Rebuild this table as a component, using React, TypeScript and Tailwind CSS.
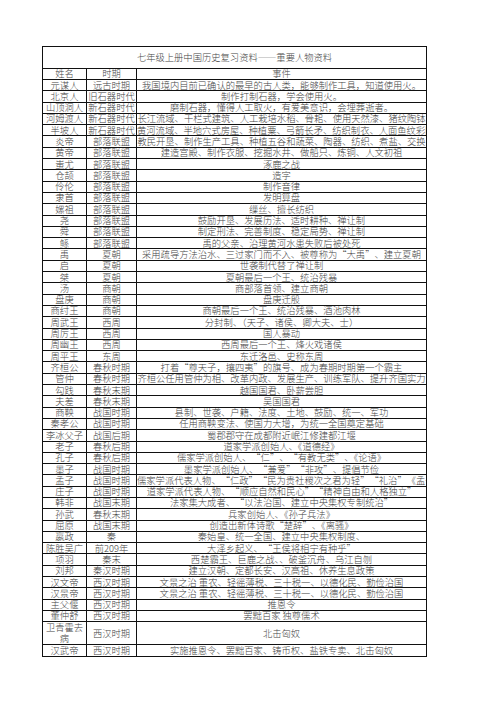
import React from "react";

type Row = [string, string, string, boolean?];

const rows: Row[] = [
  ["元谋人", "远古时期", "我国境内目前已确认的最早的古人类，能够制作工具，知道使用火。"],
  ["北京人", "旧石器时代", "制作打制石器，学会使用火。"],
  ["山顶洞人", "新石器时代", "磨制石器，懂得人工取火，有爱美意识，会埋葬逝者。"],
  ["河姆渡人", "新石器时代", "长江流域、干栏式建筑、人工栽培水稻、骨耜、使用天然漆、猪纹陶钵"],
  ["半坡人", "新石器时代", "黄河流域、半地穴式房屋、种植粟、弓箭长矛、纺织制衣、人面鱼纹彩陶盆"],
  ["炎帝", "部落联盟", "教民开垦、制作生产工具、种植五谷和蔬菜、陶器、纺织、煮盐、交换"],
  ["黄帝", "部落联盟", "建造宫殿、制作衣服、挖掘水井、做船只、炼铜、人文初祖"],
  ["蚩尤", "部落联盟", "涿鹿之战"],
  ["仓颉", "部落联盟", "造字"],
  ["伶伦", "部落联盟", "制作音律"],
  ["隶首", "部落联盟", "发明算盘"],
  ["嫘祖", "部落联盟", "缫丝、擅长纺织"],
  ["尧", "部落联盟", "鼓励开垦、发展历法、适时耕种、禅让制"],
  ["舜", "部落联盟", "制定刑法、完善制度、稳定局势、禅让制"],
  ["鲧", "部落联盟", "禹的父亲、治理黄河水患失败后被处死"],
  ["禹", "夏朝", "采用疏导方法治水、三过家门而不入、被尊称为“大禹”、建立夏朝"],
  ["启", "夏朝", "世袭制代替了禅让制"],
  ["桀", "夏朝", "夏朝最后一个王、统治残暴"],
  ["汤", "商朝", "商部落首领、建立商朝"],
  ["盘庚", "商朝", "盘庚迁殷"],
  ["商纣王", "商朝", "商朝最后一个王、统治残暴、酒池肉林"],
  ["周武王", "西周", "分封制、（天子、诸侯、卿大夫、士）"],
  ["周厉王", "西周", "国人暴动"],
  ["周幽王", "西周", "西周最后一个王、烽火戏诸侯"],
  ["周平王", "东周", "东迁洛邑、史称东周"],
  ["齐桓公", "春秋时期", "打着“尊天子，攘四夷”的旗号、成为春期时期第一个霸主"],
  ["管仲", "春秋时期", "齐桓公任用管仲为相、改革内政、发展生产、训练军队、提升齐国实力"],
  ["勾践", "春秋末期", "越国国君、卧薪尝胆"],
  ["夫差", "春秋末期", "吴国国君"],
  ["商鞅", "战国时期", "县制、世袭、户籍、法度、土地、鼓励、统一、军功"],
  ["秦孝公", "战国时期", "任用商鞅变法、使国力大增，为统一全国奠定基础"],
  ["李冰父子", "战国后期", "蜀郡郡守在成都附近岷江修建都江堰"],
  ["老子", "春秋后期", "道家学派创始人、《道德经》"],
  ["孔子", "春秋后期", "儒家学派创始人、“仁”、“有教无类”、《论语》"],
  ["墨子", "战国时期", "墨家学派创始人、“兼爱”“非攻”、提倡节俭"],
  ["孟子", "战国时期", "儒家学派代表人物、“仁政”“民为贵社稷次之君为轻”“礼治”《孟子》"],
  ["庄子", "战国时期", "道家学派代表人物、“顺应自然和民心”“精神自由和人格独立”"],
  ["韩非", "战国末期", "法家集大成者、“以法治国、建立中央集权专制统治”"],
  ["孙武", "春秋末期", "兵家创始人、《孙子兵法》"],
  ["屈原", "战国末期", "创造出新体诗歌“楚辞”、《离骚》"],
  ["嬴政", "秦", "秦始皇、统一全国、建立中央集权制度、"],
  ["陈胜吴广", "前209年", "大泽乡起义、“王侯将相宁有种乎”"],
  ["项羽", "秦末", "西楚霸王、巨鹿之战、、破釜沉舟、乌江自刎"],
  ["刘邦", "秦汉时期", "建立汉朝、定都长安、汉高祖、休养生息政策"],
  ["汉文帝", "西汉时期", "文景之治 重农、轻徭薄税、三十税一、以德化民、勤俭治国"],
  ["汉景帝", "西汉时期", "文景之治 重农、轻徭薄税、三十税一、以德化民、勤俭治国"],
  ["主父偃", "西汉时期", "推恩令"],
  ["董仲舒", "西汉时期", "罢黜百家 独尊儒术"],
  ["卫青霍去病", "西汉时期", "北击匈奴", true],
  ["汉武帝", "西汉时期", "实施推恩令、罢黜百家、铸币权、盐铁专卖、北击匈奴"],
];

function Quoted({ text }: { text: string }) {
  const parts = text.split(/([“”])/);
  return (
    <>
      {parts.map((p, i) =>
        p === "“" ? (
          <span key={i} className="inline-block w-[1em] text-right">
            {p}
          </span>
        ) : p === "”" ? (
          <span key={i} className="inline-block w-[1em] text-left">
            {p}
          </span>
        ) : (
          <React.Fragment key={i}>{p}</React.Fragment>
        )
      )}
    </>
  );
}

export default function App() {
  return (
    <div
      lang="zh-CN"
      className="w-[496px] h-[702px] bg-white pt-[46px] pl-[42px] text-[#444] font-light"
      style={{ fontFamily: '"Noto Sans CJK SC", "Noto Sans", sans-serif' }}
    >
      <div className="w-[385px] border border-[#111] text-[9.3px] leading-none">
        <div className="h-[22px] flex items-center justify-center border-b border-[#111]">
          七年级上册中国历史复习资料——重要人物资料
        </div>
        <div className="grid grid-cols-[44px_50px_minmax(0,1fr)] h-[11px] border-b border-[#111]">
          <div className="border-r border-[#111] flex items-center justify-center">姓名</div>
          <div className="border-r border-[#111] flex items-center justify-center">时期</div>
          <div className="flex items-center justify-center">事件</div>
        </div>
        {rows.map(([name, period, event, tall], i) => (
          <div
            key={i}
            className={
              "grid grid-cols-[44px_50px_minmax(0,1fr)] border-[#111] " +
              (tall ? "h-[22.6px] " : "h-[11.3px] ") +
              (i === rows.length - 1 ? "" : "border-b")
            }
          >
            <div
              className={
                "border-r border-[#111] flex items-center justify-center text-center " +
                (tall ? "leading-[11px] px-[2px]" : "whitespace-nowrap")
              }
            >
              {name}
            </div>
            <div className="border-r border-[#111] flex items-center justify-center whitespace-nowrap">
              {period}
            </div>
            <div className="min-w-0 overflow-x-clip whitespace-nowrap text-center flex items-center">
              <span className="block w-full min-w-0">
                <Quoted text={event} />
              </span>
            </div>
          </div>
        ))}
      </div>
    </div>
  );
}
